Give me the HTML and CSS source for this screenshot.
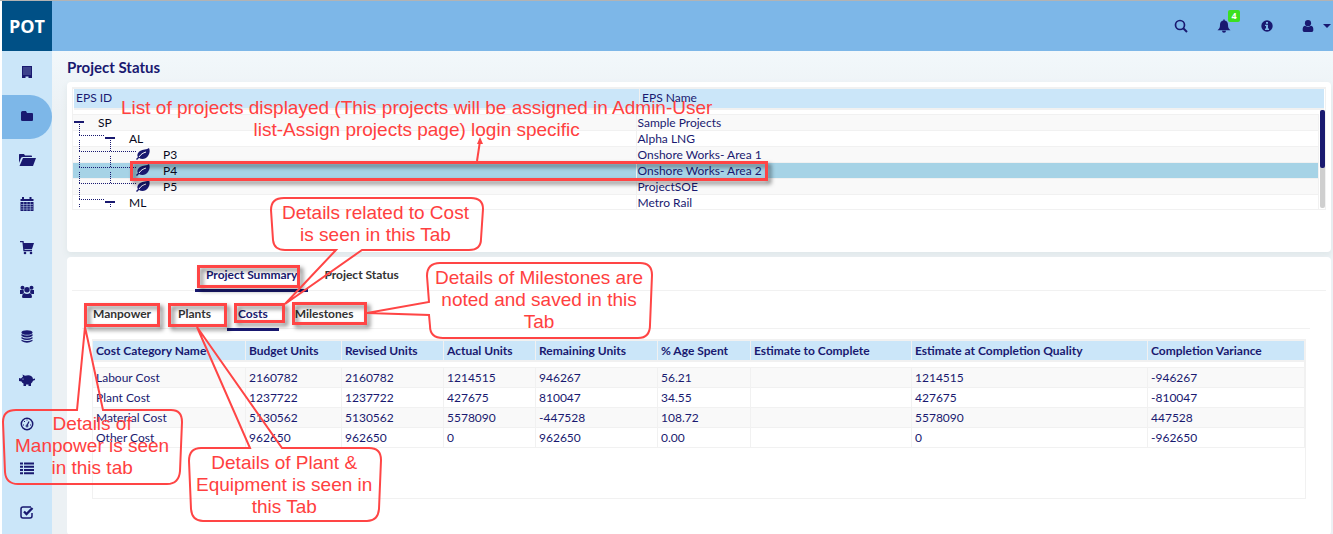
FILE: index.html
```html
<!DOCTYPE html>
<html lang="en">
<head>
<meta charset="utf-8">
<title>Project Status</title>
<link rel="stylesheet" href="styles.css">
</head>
<body>
<svg class="defs" aria-hidden="true">
  <symbol id="leaf" viewBox="0 0 14 12"><path d="M13 0C11 2 7 1 4 3C1 5 1 8 2 9L0 11L1 12L3 10C6 12 10 11 12 8C14 5 14 2 13 0Z" fill="currentColor"/><path d="M3 9C5 6 7 5 10 4" stroke="#fff" stroke-width="1" fill="none"/></symbol>
  <symbol id="branch" viewBox="0 0 90 16" overflow="visible"><path d="M6.500 -7V4M37.500 -7V4M6 4.500H63" class="dots"/><use href="#leaf" x="63" y="1" width="14" height="12"/></symbol>
</svg>
<div class="app">
  <header class="topbar">
    <a class="logo" href="#">POT</a>
    <nav class="tools" aria-label="Account">
      <button class="tool" aria-label="Search"><svg width="14" height="14" viewBox="0 0 14 14"><circle cx="6" cy="6" r="4.500" fill="none" stroke="currentColor" stroke-width="1.700"/><path d="M9 9L13 13" stroke="currentColor" stroke-width="2"/></svg></button>
      <button class="tool" aria-label="Notifications"><svg width="14" height="14" viewBox="0 0 14 14"><path d="M6.300 1.500V.5h1.400v1C10 2 11 3.500 11 6c0 3 1 4 2.500 5.200H.500C2 10 3 9 3 6C3 3.500 4 2 6.300 1.500ZM5 11.700h4A2 2 0 0 1 5 11.700Z" fill="currentColor"/></svg><span class="badge">4</span></button>
      <button class="tool" aria-label="Information"><svg width="12" height="12" viewBox="0 0 12 12"><circle cx="6" cy="6" r="5.700" fill="currentColor"/><path d="M5 2h2v1.700H5ZM4 4.700h3v3.800h1V10H4V8.500h1V6H4Z" fill="#7db7e8"/></svg></button>
      <button class="tool user" aria-label="User menu"><svg width="12" height="12" viewBox="0 0 12 12"><circle cx="6" cy="3.200" r="3.100" fill="currentColor"/><path d="M3 5.800Q6 8 9 5.800C11 6 11.500 8 11.300 10.500Q11 12 9.500 12H2.500Q1 12 .7 10.500C.5 8 1 6 3 5.800Z" fill="currentColor"/></svg><svg width="8" height="4" viewBox="0 0 8 4"><path d="M0 0H8L4 4Z" fill="currentColor"/></svg></button>
    </nav>
  </header>
  <div class="body">
    <nav class="side" aria-label="Main">
      <a href="#" aria-label="Company"><svg width="16" height="14" viewBox="0 0 16 14"><path d="M3 1H13V13H9.500V11.500H6.500V13H3Z" fill="currentColor"/><path d="M4.500 3H11.500M4.500 5H11.500M4.500 7H11.500M4.500 9H11.500" stroke="#cbe6f9" stroke-width=".8" stroke-dasharray="1 1"/></svg></a>
      <a href="#" class="on" aria-label="Projects"><svg width="16" height="14" viewBox="0 0 16 14"><path d="M3.500 2H7L8 4H13Q14 4 14 5V11Q14 12 13 12H3.500Q2 12 2 11V3.500Q2 2 3.500 2Z" fill="currentColor"/></svg></a>
      <a href="#" aria-label="Open projects"><svg width="18" height="14" viewBox="0 0 18 14"><path d="M1 10V1.500Q1 1 1.700 1H6L7 2.500H13.500Q14 2.500 14 4H5Q3.500 4 3 5ZM5 5H18L15 13H1.500Z" fill="currentColor"/></svg></a>
      <a href="#" aria-label="Calendar"><svg width="16" height="14" viewBox="0 0 16 14"><path d="M1.500 2H3V0H5V2H10.500V0H12.500V2H14.500V4H1.500ZM1.500 5H14.500V14H1.500Z" fill="currentColor"/><path d="M2 7.500H14M2 9.700H14M2 12H14M4.700 5V14M8 5V14M11.300 5V14" stroke="#cbe6f9" stroke-width=".5"/></svg></a>
      <a href="#" aria-label="Procurement"><svg width="16" height="14" viewBox="0 0 16 14"><path d="M1 .5H4L5 9.500H13" fill="none" stroke="currentColor" stroke-width="1.300"/><path d="M4 2H15L13 8H5Z" fill="currentColor"/><circle cx="6" cy="12" r="1.300" fill="currentColor"/><circle cx="12" cy="12" r="1.300" fill="currentColor"/></svg></a>
      <a href="#" aria-label="Teams"><svg width="16" height="14" viewBox="0 0 16 14" fill="currentColor"><circle cx="3.500" cy="2.700" r="2"/><circle cx="12.500" cy="2.700" r="2"/><circle cx="8" cy="4.800" r="2.700"/><path d="M1 5H4.500L5 7.500L3.500 9H1ZM15 5H11.500L11 7.500L12.500 9H15ZM5 8Q8 10 11 8Q13 9 13 12Q13 13 11.500 13H4.500Q3 13 3 12Q3 9 5 8Z"/></svg></a>
      <a href="#" aria-label="Database"><svg width="12" height="13" viewBox="0 0 12 13"><ellipse cx="6" cy="2.500" rx="5.500" ry="2.300" fill="currentColor"/><path d="M.5 4Q6 7 11.500 4V6Q6 9 .5 6ZM.5 7Q6 10 11.500 7V8.500Q6 11.500 .5 8.500ZM.5 9.700Q6 12.500 11.500 9.700V11Q6 14.500 .5 11Z" fill="currentColor"/></svg></a>
      <a href="#" aria-label="Budget"><svg width="18" height="14" viewBox="0 0 18 14"><path d="M1 5L3 5.500L5 3.500L4.500 1.500L7 2.700Q14 1 15 6L17 5.500V7L15 7.700Q14.500 9.500 13 10.500V13H10.500V11.500H8V13H5.500V10.500Q4 10 3.500 8.500L1 8Z" fill="currentColor"/><circle cx="5" cy="6" r=".6" fill="#cbe6f9"/></svg></a>
      <a href="#" aria-label="Dashboard"><svg width="14" height="14" viewBox="0 0 14 14" fill="none" stroke="currentColor"><circle cx="7" cy="7" r="5.700" stroke-width="1.500"/><path d="M7 8.500L9 4.500" stroke-width="1.200"/><circle cx="7" cy="9" r="1"/><path d="M3 8h1M4 4.500h1M6.500 3h1M10 8h1" stroke-width="1.200"/></svg></a>
      <a href="#" aria-label="Reports"><svg width="14" height="14" viewBox="0 0 14 14"><path d="M0 2.500H3M4 2.500H14M0 5.700H3M4 5.700H14M0 9H3M4 9H14M0 12.200H3M4 12.200H14" stroke="currentColor" stroke-width="2"/></svg></a>
      <a href="#" aria-label="Approvals"><svg width="14" height="14" viewBox="0 0 14 14" fill="none" stroke="currentColor"><path d="M11 2H3Q1 2 1 4V11Q1 13 3 13H10Q12 13 12 11V8" stroke-width="1.500"/><path d="M4 6.500L6.500 9L12.500 3" stroke-width="2.300"/></svg></a>
    </nav>
    <main class="main">
      <h1>Project Status</h1>
      <section class="card projects">
        <div class="grid">
          <div class="grid-head"><span>EPS ID</span><span>EPS Name</span></div>
          <div class="grid-scroll">
            <table class="tree">
              <colgroup><col class="c-id"><col></colgroup>
              <tr><td><div class="node"><svg class="d1" viewBox="0 0 25 16"><path d="M1 6H11V8H1Z" fill="currentColor"/></svg>SP</div></td><td>Sample Projects</td></tr>
              <tr><td><div class="node"><svg class="d2" viewBox="0 0 56 16"><path d="M6.500 -7V4M6 4.500H32" class="dots"/><path d="M32 6H42V8H32Z" fill="currentColor"/></svg>AL</div></td><td>Alpha LNG</td></tr>
              <tr><td><div class="node"><svg class="d3" viewBox="0 0 90 16"><use href="#branch" width="90" height="16"/></svg>P3</div></td><td>Onshore Works- Area 1</td></tr>
              <tr class="picked"><td><div class="node"><svg class="d3" viewBox="0 0 90 16"><use href="#branch" width="90" height="16"/></svg>P4</div></td><td>Onshore Works- Area 2</td></tr>
              <tr><td><div class="node"><svg class="d3" viewBox="0 0 90 16"><use href="#branch" width="90" height="16"/></svg>P5</div></td><td>ProjectSOE</td></tr>
              <tr><td><div class="node"><svg class="d2" viewBox="0 0 56 16"><path d="M6.500 -7V4M6 4.500H32M6.500 9V13M37.500 9V13" class="dots"/><path d="M32 6H42V8H32Z" fill="currentColor"/></svg>ML</div></td><td>Metro Rail</td></tr>
            </table>
            <div class="track"><div class="thumb"></div></div>
          </div>
        </div>
      </section>
      <section class="card details">
        <div class="tabs" role="tablist">
          <button class="on" role="tab" aria-selected="true">Project Summary</button>
          <button role="tab" aria-selected="false">Project Status</button>
        </div>
        <div class="tabs sub" role="tablist">
          <button role="tab" aria-selected="false">Manpower</button>
          <button role="tab" aria-selected="false">Plants</button>
          <button class="on" role="tab" aria-selected="true">Costs</button>
          <button role="tab" aria-selected="false">Milestones</button>
        </div>
        <div class="costs">
          <table>
            <colgroup><col class="w1"><col class="w2"><col class="w3"><col class="w4"><col class="w5"><col class="w6"><col class="w7"><col class="w8"><col class="w9"></colgroup>
            <thead>
              <tr><th>Cost Category Name</th><th>Budget Units</th><th>Revised Units</th><th>Actual Units</th><th>Remaining Units</th><th>% Age Spent</th><th>Estimate to Complete</th><th>Estimate at Completion Quality</th><th>Completion Variance</th></tr>
            </thead>
            <tbody>
              <tr class="gap"><td colspan="9"></td></tr>
              <tr><td>Labour Cost</td><td>2160782</td><td>2160782</td><td>1214515</td><td>946267</td><td>56.21</td><td></td><td>1214515</td><td>-946267</td></tr>
              <tr><td>Plant Cost</td><td>1237722</td><td>1237722</td><td>427675</td><td>810047</td><td>34.55</td><td></td><td>427675</td><td>-810047</td></tr>
              <tr><td>Material Cost</td><td>5130562</td><td>5130562</td><td>5578090</td><td>-447528</td><td>108.72</td><td></td><td>5578090</td><td>447528</td></tr>
              <tr><td>Other Cost</td><td>962650</td><td>962650</td><td>0</td><td>962650</td><td>0.00</td><td></td><td>0</td><td>-962650</td></tr>
            </tbody>
          </table>
        </div>
      </section>
    </main>
  </div>
</div>
<div class="notes">
  <svg class="marks" width="1333" height="534" viewBox="0 0 1333 534" fill="none">
    <g class="frames">
      <path d="M131.500 162.500H766.500V179.500H131.500Z"/>
      <path d="M198.500 266.500H298.500V286.500H198.500Z"/>
      <path d="M85.500 304.500H158.500V325.500H85.500Z"/>
      <path d="M169.500 304.500H225.500V325.500H169.500Z"/>
      <path d="M235.500 304.500H283.500V321.500H235.500Z"/>
      <path d="M293.500 303.500H365.500V323.500H293.500Z"/>
    </g>
    <g class="bubbles">
      <path d="M284 198H471Q483 198 483 209L481 239Q481 250 469 250H362L285 304L336 250H285Q274 250 273 240L271 210Q271 198 284 198Z"/>
      <path d="M440 263H640Q652 263 652 275L650 325Q650 338 638 338H443Q430 338 430 326L429 315L367 313L429 302L427 276Q427 263 440 263Z"/>
      <path d="M16 410H77L85 327L103 410H171Q182 410 182 422L180 471Q179 484 167 484H18Q6 484 5 472L3 422Q3 410 16 410Z"/>
      <path d="M201 448H250L197 327L282 448H369Q381 448 381 460L379 509Q378 521 367 521H203Q192 521 191 509L189 461Q189 448 201 448Z"/>
      <path d="M477 161L480 141"/>
    </g>
    <path d="M480 137L477 144H483Z" fill="#ff4545"/>
  </svg>
  <p class="note n-list">List of projects displayed (This projects will be assigned in Admin-User<br>list-Assign projects page) login specific</p>
  <p class="note n-cost">Details related to Cost<br>is seen in this Tab</p>
  <p class="note n-mile">Details of Milestones are<br>noted and saved in this<br>Tab</p>
  <p class="note n-man">Details of<br>Manpower is seen<br>in this tab</p>
  <p class="note n-plant">Details of Plant &amp;<br>Equipment is seen in<br>this Tab</p>
</div>
</body>
</html>
```
FILE: styles.css
```css
* { box-sizing: border-box; }
body {
  margin: 0;
  overflow: hidden;
  background: #fff;
  color: #191970;
  font: 12px/16px Lato, "Liberation Sans", sans-serif;
}
button { font: inherit; color: inherit; background: none; border: 0; padding: 0; }
.defs { position: absolute; width: 0; height: 0; }
.app { display: flex; flex-direction: column; min-height: 100vh; padding-left: 2px; border-top: 1px solid #b3b3b3; }

.topbar { display: flex; justify-content: space-between; height: 50px; background: #7db7e8; }
.logo {
  display: flex; align-items: center; justify-content: center; width: 50px;
  background: #005086; color: #fff; text-decoration: none;
  font: bold 18px "Open Sans", sans-serif;
}
.tools { display: flex; align-items: center; padding-right: 2px; }
.tool { position: relative; display: flex; align-items: center; justify-content: center; width: 43px; height: 50px; }
.tool.user { gap: 9px; justify-content: flex-end; }
.badge {
  position: absolute; top: 9px; left: 26px; width: 12px; height: 12px; border-radius: 2px;
  background: #3be020; color: #fff; font: bold 9px/12px "Open Sans", sans-serif;
}

.body { display: flex; flex: 1; }
.side { display: flex; flex-direction: column; width: 50px; background: #cbe6f9; }
.side a { display: flex; align-items: center; justify-content: center; height: 44px; padding-bottom: 2px; color: inherit; }
.side .on { background: #7db7e8; border-radius: 0 22px 22px 0; }

.main {
  display: flex; flex-direction: column; flex: 1; min-width: 0; padding: 6px 2px 0 15px;
  border-bottom: 1px solid #c8ccd0;
  background: linear-gradient(#f2f8fb, #ecf1f4 60px);
}
h1 { margin: 0 0 5px; font-size: 15px; line-height: 20px; }
.card { background: #fff; border-radius: 4px; padding: 5px; }
.projects { height: 170px; margin-bottom: 5px; box-shadow: 0 3px 6px #dfe7e9; }
.details { flex: 1; margin-bottom: -1px; }

.grid { border: 1px solid #f1f1f1; border-top-width: 2px; }
.grid-head { display: grid; grid-template-columns: 565px 1fr; height: 21px; margin: 0 1px; background: #cbe6f9; border-bottom: 2px solid #f1f1f1; line-height: 18px; }
.grid-head span { padding-left: 2px; }
.grid-head span + span { border-left: 1px solid #f1f1f1; }
.grid-scroll { display: flex; height: 99px; overflow: hidden; }
.tree { flex: 1; margin-top: 4px; border-collapse: collapse; table-layout: fixed; }
.c-id { width: 563px; }
.tree td { height: 16px; padding: 0 0 0 1px; border-top: 1px solid #f1f1f1; border-right: 1px solid #f1f1f1; line-height: 15px; }
.tree tr:nth-child(odd) { background: #f9f9f9; }
.tree .picked, .tree tr.picked td { background: #a6d3e6; }
.tree td:first-child { padding: 0; }
.node { display: flex; height: 15px; color: #080820; }
.node svg { flex: none; height: 16px; overflow: visible; color: #191970; }
.d1 { width: 25px; }
.d2 { width: 56px; }
.d3 { width: 90px; }
.dots { fill: none; stroke: #191970; stroke-width: 1; stroke-dasharray: 1 1; }
.track { width: 5px; height: 98px; margin-left: 1px; border-radius: 2px; background: #cfcfcf; }
.thumb { height: 58px; border-radius: 2px; background: #191970; }

.tabs { display: flex; gap: 5px; height: 29px; border-bottom: 1px solid #f1f1f1; padding-left: 123px; font-weight: bold; }
.tabs button { height: 30px; padding: 0 11px 2px; border-bottom: 3px solid transparent; color: #333; white-space: nowrap; }
.tabs .on { border-color: #191970; color: #191970; }
.tabs.sub { height: 28px; margin: 10px 16px 0 10px; padding: 0; }

.costs { height: 160px; margin: 10px 20px 0; border: 1px solid #f1f1f1; }
.costs table { width: 100%; border-collapse: separate; border-spacing: 0; table-layout: fixed; }
.w1 { width: 153px; }
.w2 { width: 96px; }
.w3 { width: 102px; }
.w4 { width: 92px; }
.w5 { width: 122px; }
.w6 { width: 93px; }
.w7 { width: 161px; }
.w8 { width: 236px; }
.costs th, .costs td { height: 20px; padding: 0 3px; text-align: left; border-right: 1px solid #f1f1f1; white-space: nowrap; }
.costs th { height: 22px; border-top: 1px solid #f1f1f1; border-bottom: 2px solid #f1f1f1; background: #cbe6f9; }
.costs td { border-bottom: 1px solid #f1f1f1; line-height: 19px; }
.costs .gap td { height: 6px; padding: 0; line-height: 0; }
.costs tr:nth-child(even) td { background: #f9f9f9; }

/* annotation layer floating over the page */
.notes { position: absolute; top: 0; left: 0; pointer-events: none; }
.marks { display: block; }
.frames { stroke: #ff4545; stroke-width: 3; filter: drop-shadow(3px 3px 2px rgba(0,0,0,.5)); }
.bubbles { stroke: #ff4545; stroke-width: 2; }
.note {
  position: absolute; margin: 0; color: #ff4040; text-align: center; white-space: nowrap;
  font: 19px/22px "Liberation Sans", Arial, sans-serif;
}
.n-list { left: 121px; top: 97px; }
.n-cost { left: 282px; top: 202px; }
.n-mile { left: 435px; top: 267px; }
.n-man { left: 15px; top: 413px; }
.n-plant { left: 196px; top: 452px; }
```
